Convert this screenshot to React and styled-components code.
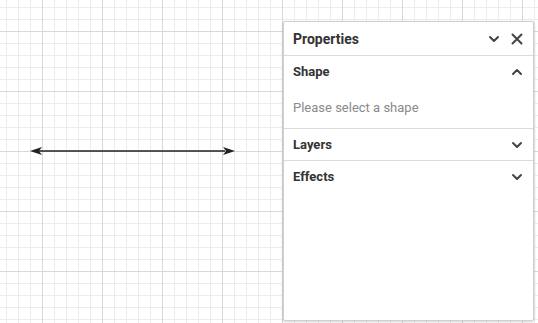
import React from 'react';
import styled, { createGlobalStyle } from 'styled-components';

const GlobalStyle = createGlobalStyle`
  html, body {
    margin: 0;
    padding: 0;
    width: 538px;
    height: 323px;
    overflow: hidden;
    font-family: Roboto, "Liberation Sans", Arial, sans-serif;
  }
`;

const Canvas = styled.div`
  position: relative;
  width: 538px;
  height: 323px;
  background-color: #ffffff;
  background-image:
    linear-gradient(to right, #d8d8d8 1px, transparent 1px),
    linear-gradient(to bottom, #d8d8d8 1px, transparent 1px),
    linear-gradient(to right, #ececec 1px, transparent 1px),
    linear-gradient(to bottom, #ececec 1px, transparent 1px);
  background-size: 60px 60px, 60px 60px, 12px 12px, 12px 12px;
  background-position: 42px 0, 0 31px, 6px 0, 0 7px;
  overflow: hidden;
`;

const ArrowSvg = styled.svg`
  position: absolute;
  left: 28px;
  top: 144px;
`;

const Panel = styled.div`
  position: absolute;
  left: 283px;
  top: 21px;
  width: 249px;
  height: 298px;
  background: #ffffff;
  border: 1px solid #d0d0d0;
  border-radius: 2px;
  box-shadow: 0 1px 3px rgba(0, 0, 0, 0.18);
  display: flex;
  flex-direction: column;
`;

const PanelHeader = styled.div`
  height: 33px;
  display: flex;
  align-items: center;
  justify-content: space-between;
  padding: 0 8px 0 9px;
  border-bottom: 1px solid #dadada;
`;

const Title = styled.div`
  font-size: 14px;
  font-weight: 700;
  color: #333333;
`;

const Actions = styled.div`
  display: flex;
  align-items: center;
  gap: 7px;
`;

const IconBtn = styled.span`
  display: flex;
  width: 16px;
  height: 16px;
  align-items: center;
  justify-content: center;
  color: #444444;
`;

const Section = styled.div`
  border-bottom: ${(p) => (p.last ? 'none' : '1px solid #dadada')};
`;

const SectionHead = styled.div`
  height: 31px;
  display: flex;
  align-items: center;
  justify-content: space-between;
  padding: 0 8px 0 9px;
`;

const SectionTitle = styled.div`
  font-size: 13px;
  font-weight: 700;
  color: #333333;
`;

const SectionBody = styled.div`
  padding: 12px 9px 12px;
  font-size: 13px;
  color: #8a8a8a;
  line-height: 17px;
`;

const Chevron = ({ up }) => (
  <svg width="12" height="12" viewBox="0 0 12 12">
    <path
      d={up ? 'M2 8 L6 4 L10 8' : 'M2 4 L6 8 L10 4'}
      fill="none"
      stroke="#444"
      strokeWidth="2"
      strokeLinecap="round"
      strokeLinejoin="round"
    />
  </svg>
);

const Close = () => (
  <svg width="12" height="12" viewBox="0 0 12 12">
    <path d="M1.5 1.5 L10.5 10.5 M10.5 1.5 L1.5 10.5" stroke="#444" strokeWidth="2" strokeLinecap="round" />
  </svg>
);

const App = () => {
  return (
    <>
      <GlobalStyle />
      <Canvas>
        <ArrowSvg width="210" height="14" viewBox="0 0 210 14">
          <line x1="10" y1="7" x2="197" y2="7" stroke="#222" strokeWidth="1.6" />
          <path d="M2 7 L14 3 L11 7 L14 11 Z" fill="#222" />
          <path d="M207 7 L195 3 L198 7 L195 11 Z" fill="#222" />
        </ArrowSvg>
        <Panel>
          <PanelHeader>
            <Title>Properties</Title>
            <Actions>
              <IconBtn><Chevron /></IconBtn>
              <IconBtn><Close /></IconBtn>
            </Actions>
          </PanelHeader>
          <Section>
            <SectionHead>
              <SectionTitle>Shape</SectionTitle>
              <IconBtn><Chevron up /></IconBtn>
            </SectionHead>
            <SectionBody>Please select a shape</SectionBody>
          </Section>
          <Section>
            <SectionHead>
              <SectionTitle>Layers</SectionTitle>
              <IconBtn><Chevron /></IconBtn>
            </SectionHead>
          </Section>
          <Section last>
            <SectionHead>
              <SectionTitle>Effects</SectionTitle>
              <IconBtn><Chevron /></IconBtn>
            </SectionHead>
          </Section>
        </Panel>
      </Canvas>
    </>
  );
};

export default App;
